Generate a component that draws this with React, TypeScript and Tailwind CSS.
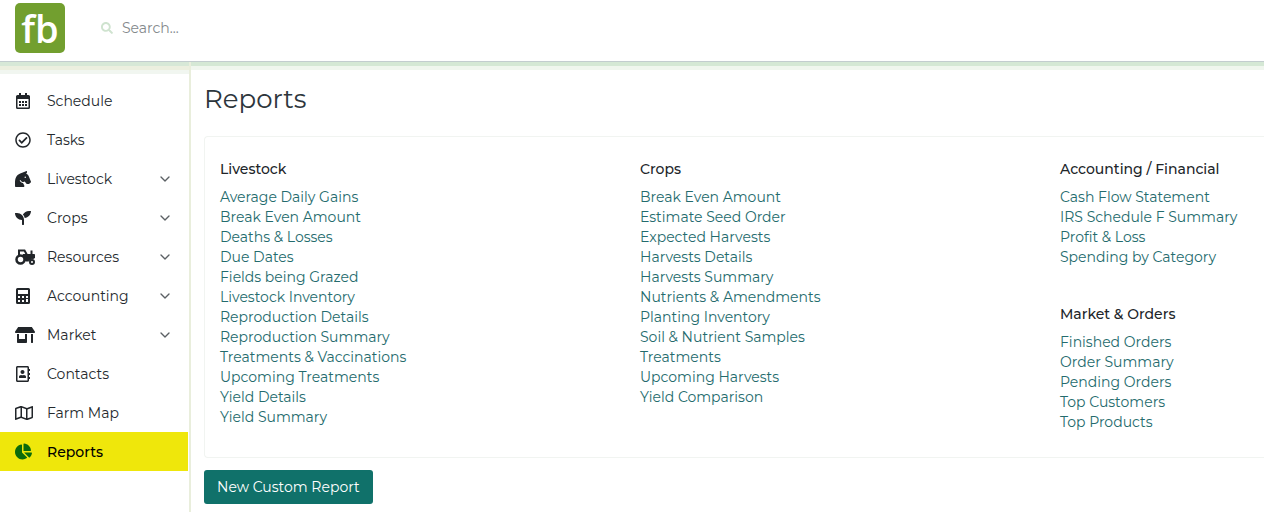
import type { ReactNode } from "react";
import {
  FaChartPie,
  FaHorseHead,
  FaRegAddressBook,
  FaRegCheckCircle,
  FaRegMap,
  FaSearch,
  FaSeedling,
  FaStoreAlt,
} from "react-icons/fa";
import { FiChevronDown } from "react-icons/fi";

interface NavItem {
  label: string;
  icon: ReactNode;
  expandable?: boolean;
  active?: boolean;
}

interface ReportGroup {
  title: string;
  reports: string[];
}

// ─── Outlined icons ───────────────────────────────────────────────────────────
function CalendarIcon() {
  return (
    <svg viewBox="0 0 16 16" className="h-4 w-4" fill="currentColor" aria-hidden="true">
      <path
        fillRule="evenodd"
        d="M4 0h2v2h4V0h2v2h1.500a1.500 1.500 0 0 1 1.500 1.500v11a1.500 1.500 0 0 1-1.500 1.500h-11A1.500 1.500 0 0 1 1 14.500v-11A1.500 1.500 0 0 1 2.500 2H4V0ZM2.500 6v8.500h11V6h-11Z"
      />
      <path d="M4 8h2v2H4zM7 8h2v2H7zM10 8h2v2h-2zM4 11h2v2H4zM7 11h2v2H7zM10 11h2v2h-2z" />
    </svg>
  );
}

function CalculatorIcon() {
  return (
    <svg viewBox="0 0 16 16" className="h-4 w-4" fill="currentColor" aria-hidden="true">
      <path
        fillRule="evenodd"
        d="M2.500 0h11A1.500 1.500 0 0 1 15 1.500v13a1.500 1.500 0 0 1-1.500 1.500h-11A1.500 1.500 0 0 1 1 14.500v-13A1.500 1.500 0 0 1 2.500 0ZM3 2v4h10V2H3Zm0 6v2h2V8H3Zm4 0v2h2V8H7Zm4 0v2h2V8h-2Zm-8 4v2h2v-2H3Zm4 0v2h2v-2H7Zm4-1v3h2v-3h-2Z"
      />
    </svg>
  );
}

function TractorIcon() {
  return (
    <svg viewBox="0 0 20 16" className="h-4 w-5" fill="none" stroke="currentColor" aria-hidden="true">
      <circle cx="5.500" cy="10.500" r="4" strokeWidth="2.500" />
      <circle cx="17" cy="13" r="2" strokeWidth="2" />
      <path d="M4 6V1.500h5.500L12 6" strokeWidth="2" />
      <path d="M16.500 1.500V6" strokeWidth="2" />
      <path d="M8 5.500h11.500v3.500L16 10l-2.500 2h-3L9 7.500Z" fill="currentColor" strokeWidth="1" />
    </svg>
  );
}

const NAV_ITEMS: NavItem[] = [
  { label: "Schedule", icon: <CalendarIcon /> },
  { label: "Tasks", icon: <FaRegCheckCircle /> },
  { label: "Livestock", icon: <FaHorseHead />, expandable: true },
  { label: "Crops", icon: <FaSeedling />, expandable: true },
  { label: "Resources", icon: <TractorIcon />, expandable: true },
  { label: "Accounting", icon: <CalculatorIcon />, expandable: true },
  { label: "Market", icon: <FaStoreAlt className="h-4 w-5" />, expandable: true },
  { label: "Contacts", icon: <FaRegAddressBook /> },
  { label: "Farm Map", icon: <FaRegMap className="h-4 w-[18px]" /> },
  { label: "Reports", icon: <FaChartPie className="h-[17px] w-[17px]" />, active: true },
];

const REPORT_COLUMNS: ReportGroup[][] = [
  [
    {
      title: "Livestock",
      reports: [
        "Average Daily Gains",
        "Break Even Amount",
        "Deaths & Losses",
        "Due Dates",
        "Fields being Grazed",
        "Livestock Inventory",
        "Reproduction Details",
        "Reproduction Summary",
        "Treatments & Vaccinations",
        "Upcoming Treatments",
        "Yield Details",
        "Yield Summary",
      ],
    },
  ],
  [
    {
      title: "Crops",
      reports: [
        "Break Even Amount",
        "Estimate Seed Order",
        "Expected Harvests",
        "Harvests Details",
        "Harvests Summary",
        "Nutrients & Amendments",
        "Planting Inventory",
        "Soil & Nutrient Samples",
        "Treatments",
        "Upcoming Harvests",
        "Yield Comparison",
      ],
    },
  ],
  [
    {
      title: "Accounting / Financial",
      reports: [
        "Cash Flow Statement",
        "IRS Schedule F Summary",
        "Profit & Loss",
        "Spending by Category",
      ],
    },
    {
      title: "Market & Orders",
      reports: [
        "Finished Orders",
        "Order Summary",
        "Pending Orders",
        "Top Customers",
        "Top Products",
      ],
    },
  ],
];

function Header() {
  return (
    <header className="flex h-[62px] items-start border-b border-[#c3cdcf] bg-white pt-[3px] pl-[15px]">
      <a
        href="#"
        className="flex h-[50px] w-[50px] items-center justify-center rounded-[5px] bg-[#729f2f] font-['Open_Sans',sans-serif] text-[38px] font-semibold leading-none text-white"
      >
        fb
      </a>
      <label className="ml-9 flex h-[50px] flex-1 items-center gap-[9px]">
        <FaSearch className="h-3 w-3 text-[#cfe3cf]" aria-hidden="true" />
        <input
          type="search"
          aria-label="Search"
          placeholder="Search..."
          className="w-60 bg-transparent outline-none placeholder:text-[#84898c]"
        />
      </label>
    </header>
  );
}

function Sidebar() {
  return (
    <nav className="w-[191px] shrink-0 border-r-2 border-[#e9eedc]">
      <div className="h-3 border-b-4 border-t-4 border-b-[#f1f6f0] border-t-[#d7e8d7] bg-[#ecefdf]" />
      <ul className="mr-px pt-[7px]">
        {NAV_ITEMS.map((item) => (
          <li key={item.label}>
            <a
              href="#"
              aria-current={item.active ? "page" : undefined}
              className={`flex h-[39px] items-center pl-[15px] pr-[15px] ${
                item.active ? "bg-[#efe70b] font-medium text-black" : "text-[#24292d]"
              }`}
            >
              <span
                className={`w-8 shrink-0 text-base ${
                  item.active ? "text-[#0b6b0b]" : "text-[#212529]"
                }`}
              >
                {item.icon}
              </span>
              <span className="flex-1">{item.label}</span>
              {item.expandable && <FiChevronDown className="h-4 w-4 text-[#5b6064]" />}
            </a>
          </li>
        ))}
      </ul>
    </nav>
  );
}

function ReportList({ title, reports }: ReportGroup) {
  return (
    <section>
      <h2 className="mb-2 font-medium text-[#212529]">{title}</h2>
      <ul>
        {reports.map((report) => (
          <li key={report}>
            <a href="#" className="text-[#246b6d] hover:underline">
              {report}
            </a>
          </li>
        ))}
      </ul>
    </section>
  );
}

export default function App() {
  return (
    <div className="flex min-h-screen flex-col overflow-hidden bg-white font-['Montserrat','Inter',sans-serif] text-[14px] leading-5">
      <Header />
      <div className="flex flex-1">
        <Sidebar />
        <main className="min-w-0 flex-1">
          <div className="h-2 border-b-4 border-t-4 border-b-[#f0f6ee] border-t-[#d5e8d5]" />
          <div className="pt-[11px] pl-[13px]">
            <h1 className="text-[26px] leading-9 text-[#2d363c]">Reports</h1>
            <div className="mt-[19px] grid grid-cols-[35fr_35fr_17fr] rounded-l border border-r-0 border-[#f1f4f1] pt-[22px] pb-[25px] pl-[15px]">
              {REPORT_COLUMNS.map((groups) => (
                <div key={groups[0].title} className="flex flex-col gap-[37px] whitespace-nowrap">
                  {groups.map((group) => (
                    <ReportList key={group.title} {...group} />
                  ))}
                </div>
              ))}
            </div>
            <button
              type="button"
              className="mt-3 h-[34px] rounded-[3px] bg-[#10716a] px-[13px] text-white"
            >
              New Custom Report
            </button>
          </div>
        </main>
      </div>
    </div>
  );
}
